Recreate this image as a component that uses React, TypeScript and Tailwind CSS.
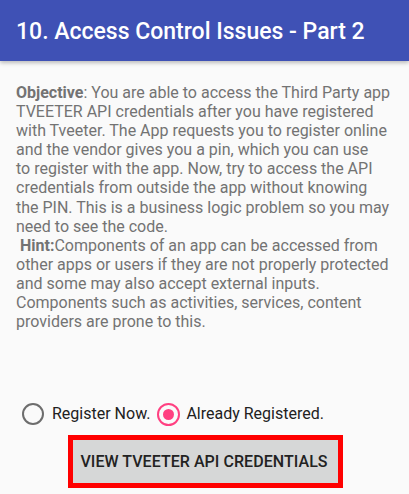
import React from "react";

const lines1 = [
  <><b className="font-bold">Objective</b>: You are able to access the Third Party app</>,
  <>TVEETER API credentials after you have registered</>,
  <>with Tveeter. The App requests you to register online</>,
  <>and the vendor gives you a pin, which you can use</>,
  <>to register with the app. Now, try to access the API</>,
  <>credentials from outside the app without knowing</>,
  <>the PIN. This is a business logic problem so you may</>,
  <>need to see the code.</>,
  <>&nbsp;<b className="font-bold">Hint:</b>Components of an app can be accessed from</>,
  <>other apps or users if they are not properly protected</>,
  <>and some may also accept external inputs.</>,
  <>Components such as activities, services, content</>,
  <>providers are prone to this.</>,
];

export default function App() {
  return (
    <div
      className="w-[409px] h-[494px] bg-[#fafafa] flex flex-col overflow-hidden"
      style={{ fontFamily: "Roboto, 'Noto Sans', sans-serif" }}
    >
      <div className="h-[61px] bg-[#3f51b5] flex items-center pl-4 shadow-[0_2px_4px_rgba(0,0,0,0.25)] relative z-10 shrink-0">
        <span className="text-white text-[23px] leading-none font-medium mt-[2px]">
          10. Access Control Issues - Part 2
        </span>
      </div>
      <div className="pl-4 pt-[22px] text-[16px] leading-[19.1px] text-[#737373] whitespace-nowrap">
        {lines1.map((l, i) => (
          <div key={i}>{l}</div>
        ))}
      </div>
      <div className="mt-[71px] flex items-center pl-[22px] text-[16px] text-[#212121] h-[24px]">
        <div className="w-[22px] h-[22px] rounded-full border-2 border-[#6d6d6d]" />
        <span className="ml-[8px]">Register Now.</span>
        <div className="ml-[7px] w-[23px] h-[23px] rounded-full border-2 border-[#ff4081] flex items-center justify-center">
          <div className="w-[11px] h-[11px] rounded-full bg-[#ff4081]" />
        </div>
        <span className="ml-[6px]">Already Registered.</span>
      </div>
      <div className="mt-[9px] flex justify-center pl-[1px]">
        <div className="w-[275px] h-[53px] border-[5px] border-[#ff0000] bg-[#d6d7d7] flex items-center justify-center">
          <span className="text-[16px] font-medium text-[#222] ml-[-2px] tracking-[0.05px]">
            VIEW TVEETER API CREDENTIALS
          </span>
        </div>
      </div>
    </div>
  );
}
